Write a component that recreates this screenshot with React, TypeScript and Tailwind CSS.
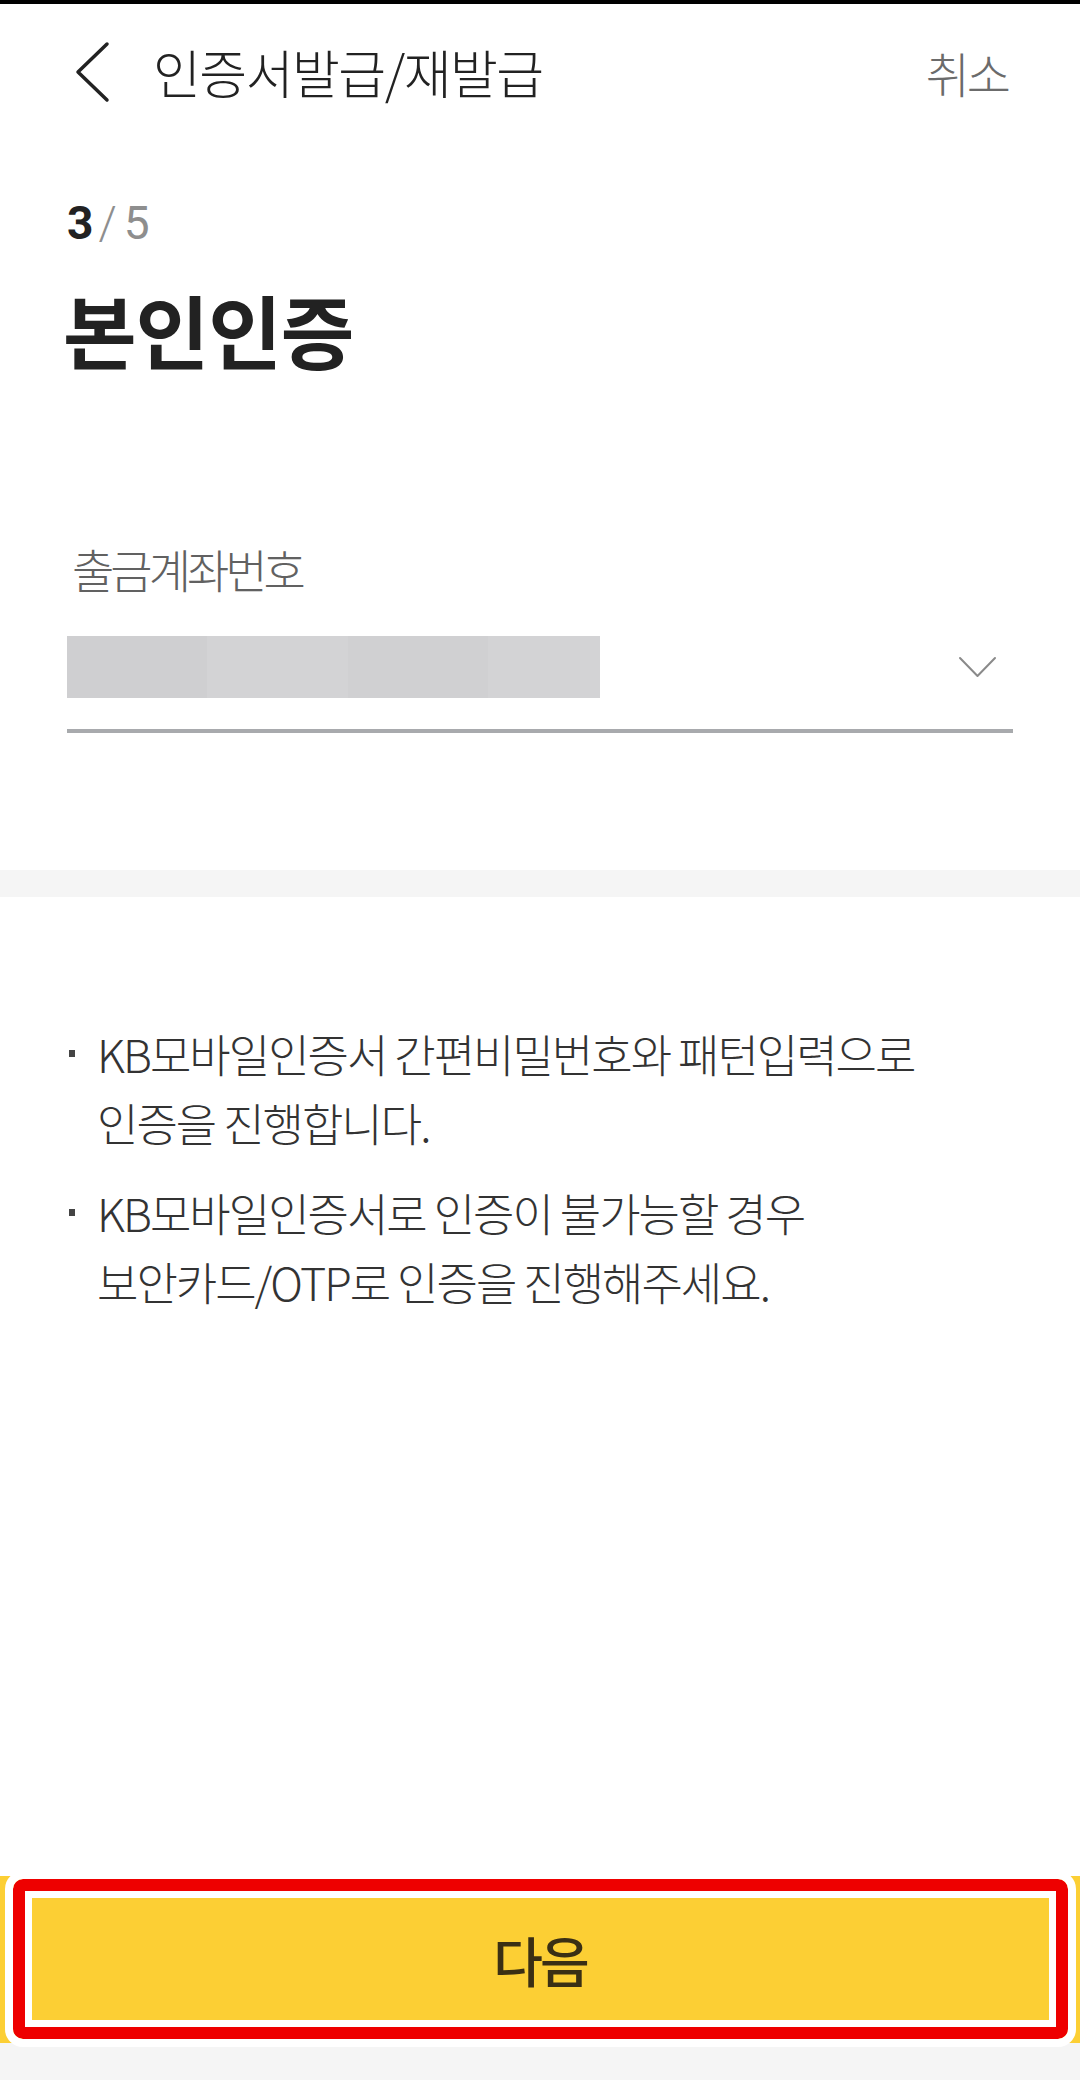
import React from 'react';

const notes = [
  ['KB모바일인증서 간편비밀번호와 패턴입력으로', '인증을 진행합니다.'],
  ['KB모바일인증서로 인증이 불가능할 경우', '보안카드/OTP로 인증을 진행해주세요.'],
];

function BackIcon() {
  return (
    <svg width="37" height="64" viewBox="0 0 37 64" fill="none" className="shrink-0">
      <polyline points="33,4 4,32 33,60" stroke="#222" strokeWidth="3.5" strokeLinecap="round" strokeLinejoin="round" />
    </svg>
  );
}

function ChevronDown() {
  return (
    <svg width="39" height="23" viewBox="0 0 39 23" fill="none">
      <polyline points="2,2 19.5,20 37,2" stroke="#8a8a8a" strokeWidth="2" strokeLinecap="round" strokeLinejoin="round" />
    </svg>
  );
}

export default function App() {
  return (
    <div className="w-[1080px] h-[2080px] flex flex-col bg-white text-[#222] font-['Noto_Sans_CJK_KR','Noto_Sans',sans-serif] overflow-hidden">
      {/* status bar remnant */}
      <div className="h-[4px] bg-black" />

      <header className="h-[136px] flex items-center pl-[74px] pr-[72px]">
        <BackIcon />
        <h1 className="ml-[42px] text-[52px] leading-none font-light tracking-[-1.5px] text-[#222]">인증서발급/재발급</h1>
        <button className="ml-auto text-[48px] leading-none font-light tracking-[-3px] text-[#6b6b6b]">취소</button>
      </header>

      <section className="px-[67px]">
        <div className="mt-[60px] flex items-baseline font-['Roboto',sans-serif] text-[46px] leading-none">
          <span className="font-bold text-[#222]">3</span>
          <span className="ml-[5px] font-light text-[#8e8e8e]">/</span>
          <span className="ml-[7px] text-[#8e8e8e]">5</span>
        </div>
        <h2 className="mt-[42px] -ml-[4px] text-[80px] leading-none font-bold tracking-[-1px] text-[#222]">본인인증</h2>

        <p className="mt-[177px] ml-[5px] text-[46px] leading-none font-light tracking-[-4px] text-[#616161]">출금계좌번호</p>

        <div className="mt-[45px] h-[62px] flex items-center justify-between">
          <div className="w-[533px] h-full flex">
            <div className="w-[140px] bg-[#cfcfd1]" />
            <div className="w-[141px] bg-[#d3d3d5]" />
            <div className="w-[140px] bg-[#d0d0d2]" />
            <div className="flex-1 bg-[#d3d3d5]" />
          </div>
          <div className="mr-[16px]">
            <ChevronDown />
          </div>
        </div>
        <div className="mt-[31px] h-[4px] bg-[#a8aaad]" />
      </section>

      <div className="mt-[137px] h-[27px] bg-[#f5f5f5]" />

      <section className="pt-[122px] px-[67px] flex flex-col gap-[21px]">
        {notes.map((lines, i) => (
          <div key={i} className="flex">
            <div className="w-[30px] shrink-0">
              <div className="mt-[31px] ml-[2px] w-[6px] h-[7px] bg-[#444]" />
            </div>
            <p className="text-[45px] leading-[69px] font-light tracking-[-2px] text-[#333]">
              {lines[0]}
              <br />
              {lines[1]}
            </p>
          </div>
        ))}
      </section>

      <div className="flex-1" />

      <div className="relative h-[167px] bg-[#fccf34] flex items-center justify-center">
        <span className="text-[54px] leading-none font-medium tracking-[-3px] text-[#3a2f14]">다음</span>
        {/* highlight annotation */}
        <div className="absolute left-[13px] right-[12px] top-[3px] bottom-[4px] rounded-[10px] border-[12px] border-[#ee0000] outline-[8px] outline-solid outline-white shadow-[inset_0_0_0_7px_#fff]" />
      </div>
      <div className="h-[37px] bg-[#f5f5f5]" />
    </div>
  );
}
